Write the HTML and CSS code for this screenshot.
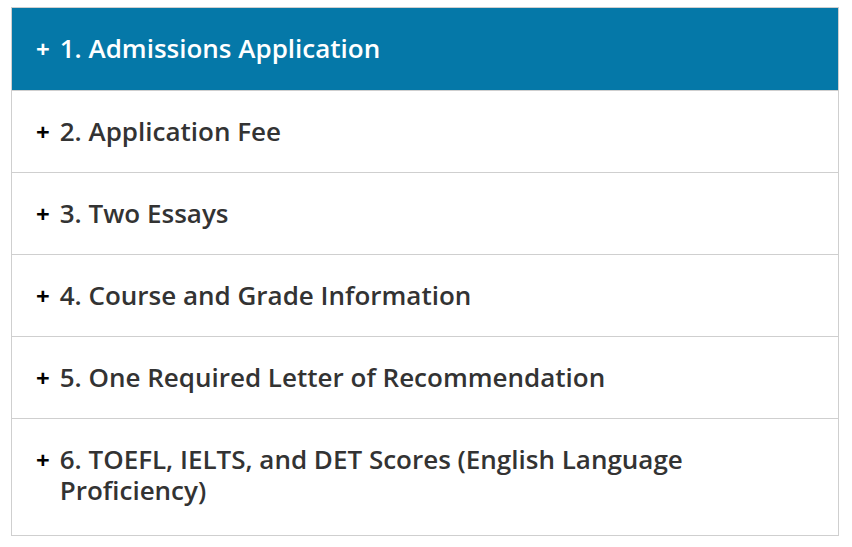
FILE: index.html
```html
<!DOCTYPE html>
<html>
<head>
<meta charset="utf-8">
<link rel="stylesheet" href="styles.css">
</head>
<body>
<div class="accordion">
  <div class="item active"><span class="plus">+</span><span class="label">1. Admissions Application</span></div>
  <div class="item"><span class="plus">+</span><span class="label">2. Application Fee</span></div>
  <div class="item"><span class="plus">+</span><span class="label">3. Two Essays</span></div>
  <div class="item"><span class="plus">+</span><span class="label">4. Course and Grade Information</span></div>
  <div class="item"><span class="plus">+</span><span class="label">5. One Required Letter of Recommendation</span></div>
  <div class="item"><span class="plus">+</span><span class="label">6. TOEFL, IELTS, and DET Scores (English Language Proficiency)</span></div>
</div>
</body>
</html>
```

FILE: styles.css
```css
html, body {
  margin: 0;
  padding: 0;
  background: #fff;
}
body {
  padding: 7px 13px 0 11px;
  font-family: "Open Sans", "Lato", sans-serif;
}
.accordion {
  border: 1px solid #cfcfcf;
}
.item {
  display: flex;
  gap: 10px;
  padding: 25px 24px 25px 24px;
  border-top: 1px solid #cfcfcf;
  font-size: 26px;
  line-height: 31px;
  font-weight: 600;
  color: #333;
}
.item:first-child {
  border-top: none;
  padding-bottom: 26px;
}
.item:last-child {
  padding-bottom: 29px;
}
.item.active {
  background: #0578a8;
  color: #fff;
}
.plus {
  color: #000;
  flex: none;
  font-weight: 700;
  font-size: 24px;
}
.item.active .plus {
  color: #fff;
}
.label {
  max-width: 680px;
}
```
